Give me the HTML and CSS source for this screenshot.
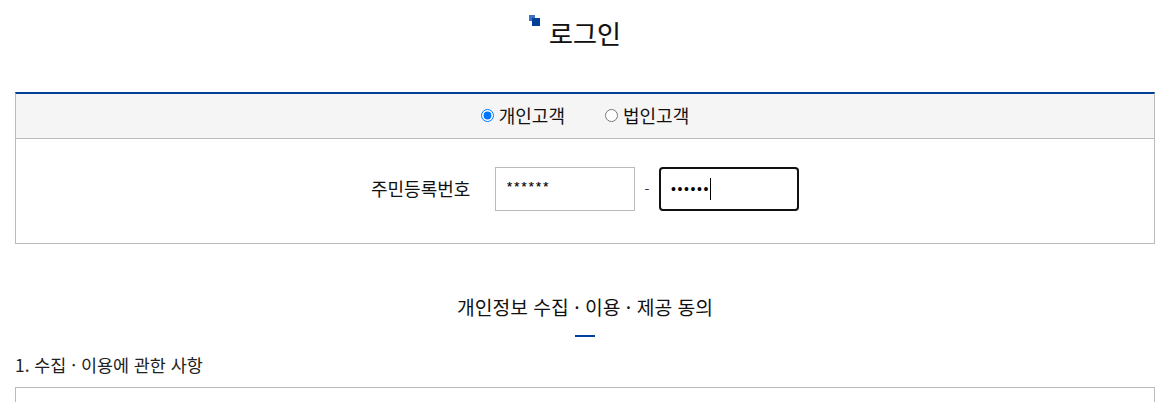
FILE: index.html
```html
<!DOCTYPE html>
<html lang="ko">
<head>
<meta charset="utf-8">
<title>로그인</title>
<link rel="stylesheet" href="styles.css">
</head>
<body>
<main class="page">
  <h1 class="title"><span class="title-mark"><i class="mark-a"></i><i class="mark-b"></i></span>로그인</h1>
  <form class="login">
    <div class="tabs">
      <label class="tab"><input type="radio" name="kind" checked>개인고객</label>
      <label class="tab"><input type="radio" name="kind">법인고객</label>
    </div>
    <div class="id-row">
      <label class="id-label">주민등록번호</label>
      <input class="field field-text" type="text" value="******">
      <span class="dash">-</span>
      <div class="field field-focus"><span class="dots">••••••</span><i class="caret"></i></div>
    </div>
  </form>
  <h2 class="agree-title">개인정보 수집 · 이용 · 제공 동의</h2>
  <div class="agree-rule"></div>
  <h3 class="sub-title">1. 수집 · 이용에 관한 사항</h3>
  <div class="terms"></div>
</main>
</body>
</html>
```
FILE: styles.css
```css
* { box-sizing: border-box; }
html, body { margin: 0; height: 402px; overflow: hidden; background: #fff; }
body { font-family: "Noto Sans CJK KR", "Noto Sans", sans-serif; color: #111; }
.page { padding: 0 15px; height: 402px; overflow: hidden; }
.title {
  margin: 0; height: 92px; padding: 14px 20px 0 0;
  display: flex; justify-content: center; align-items: flex-start;
  font-size: 26px; font-weight: 400; line-height: 38px; color: #111;
  -webkit-text-stroke: 0.2px #111;
}
.title-mark { position: relative; width: 20px; height: 38px; }
.mark-a { position: absolute; left: 0; top: 1px; width: 6px; height: 6px; background: #3a73c9; }
.mark-b { position: absolute; left: 3px; top: 4px; width: 8px; height: 8px; background: #004098; }
.login { border: 1px solid #bbb; border-top: 2px solid #004098; }
.tabs {
  height: 45px; padding-bottom: 2px; background: #f5f5f5; border-bottom: 1px solid #bbb;
  display: flex; justify-content: center; gap: 40px; align-items: center;
  font-size: 18px; color: #111;
}
.tab { display: flex; align-items: center; gap: 5px; }
.tab input { margin: 0; width: 13px; height: 13px; }
.id-row { height: 104px; padding-bottom: 4px; display: flex; align-items: center; justify-content: center; }
.id-label { width: 124px; padding-bottom: 2px; font-size: 18px; color: #111; }
.field {
  width: 140px; height: 44px; border: 1px solid #bbb; background: #fff;
  padding: 0 11px; font-family: "Liberation Sans", sans-serif; font-size: 16px; color: #000;
  border-radius: 0; outline: none;
}
.field-text { padding-bottom: 6px; font-size: 13px; letter-spacing: 2.2px; -webkit-text-stroke: 0.2px #000; }
.dash { width: 24px; text-align: center; font-size: 14px; color: #333; }
.field-focus {
  border: 2px solid #111; border-radius: 4px; padding-left: 10px;
  display: flex; align-items: center; font-size: 14px;
}
.dots { letter-spacing: 1.6px; }
.caret { width: 1px; height: 22px; background: #000; }
.agree-title { margin: 48px 0 0; height: 30px; text-align: center; font-size: 19.3px; font-weight: 400; line-height: 30px; color: #111; }
.agree-rule { width: 20px; height: 2px; background: #004098; margin: 13px auto 0; }
.sub-title { margin: 13px 0 0; font-size: 17.4px; font-weight: 400; line-height: 30px; color: #222; }
.terms { margin-top: 7px; height: 60px; border: 1px solid #bbb; }
```
